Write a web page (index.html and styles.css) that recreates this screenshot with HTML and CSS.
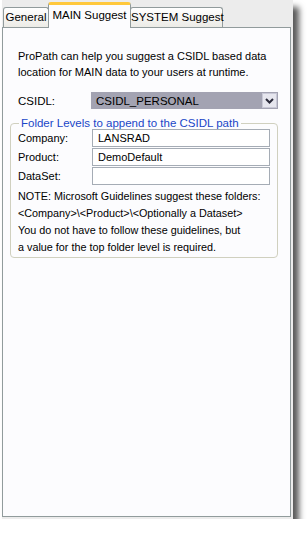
FILE: index.html
```html
<!DOCTYPE html>
<html lang="en">
<head>
    <meta charset="UTF-8">
    <meta name="viewport" content="width=device-width, initial-scale=1.0">
    <title>ProPath Settings</title>
    <link rel="stylesheet" href="styles.css">
</head>
<body>
    <div class="window">
        <div class="tabs">
            <div class="tab tab-general">General</div>
            <div class="tab tab-main active">MAIN Suggest</div>
            <div class="tab tab-system">SYSTEM Suggest</div>
        </div>
        <div class="panel">
            <p class="intro">ProPath can help you suggest a CSIDL based data<br>location for MAIN data to your users at runtime.</p>
            <div class="csidl-row">
                <span class="label">CSIDL:</span>
                <div class="select">
                    <span class="select-text">CSIDL_PERSONAL</span>
                    <span class="drop">
                        <svg width="9" height="6" viewBox="0 0 9 6"><path d="M1 1 L4.5 4.5 L8 1" fill="none" stroke="#2b2b3b" stroke-width="2"/></svg>
                    </span>
                </div>
            </div>
            <fieldset class="group">
                <legend>Folder Levels to append to the CSIDL path</legend>
                <div class="field">
                    <span class="label">Company:</span>
                    <div class="input">LANSRAD</div>
                </div>
                <div class="field">
                    <span class="label">Product:</span>
                    <div class="input">DemoDefault</div>
                </div>
                <div class="field">
                    <span class="label">DataSet:</span>
                    <div class="input"></div>
                </div>
                <p class="note">NOTE: Microsoft Guidelines suggest these folders:<br>&lt;Company&gt;\&lt;Product&gt;\&lt;Optionally a Dataset&gt;<br>You do not have to follow these guidelines, but<br>a value for the top folder level is required.</p>
            </fieldset>
        </div>
    </div>
</body>
</html>
```

FILE: styles.css
```css
body {
    margin: 0;
    background: #fff;
    font-family: "Liberation Sans", Arial, sans-serif;
    font-size: 11px;
    color: #000;
}

.window {
    width: 289px;
    margin-left: 2px;
    padding: 0 2px 2px 0;
    background: #ececec;
    box-shadow: 6px 7px 6px rgba(0, 0, 0, 0.65);
}

.tabs {
    display: flex;
    align-items: flex-end;
    height: 27px;
    padding-left: 1px;
}

.tab {
    box-sizing: border-box;
    height: 20px;
    line-height: 18px;
    text-align: center;
    white-space: nowrap;
    font-size: 11.5px;
    border: 1px solid #919b9c;
    border-bottom: none;
    border-radius: 3px 3px 0 0;
    background: linear-gradient(#ffffff, #ecebe6);
    margin-right: -1px;
}

.tab-general { width: 46px; }
.tab-main { width: 83px; }
.tab-system { width: 93px; }

.tab.active {
    position: relative;
    z-index: 1;
    height: 26px;
    margin-bottom: -1px;
    line-height: 20px;
    background: #fcfcfe;
    border-top: 3px solid #ffc83c;
}

.panel {
    box-sizing: border-box;
    height: 490px;
    border: 1px solid #919b9c;
    background: #fcfcfe;
    padding: 20px 0 0 15px;
}

.intro {
    margin: 0;
    line-height: 16px;
    font-size: 11px;
}

.csidl-row {
    display: flex;
    align-items: center;
    margin-top: 12px;
}

.csidl-row .label {
    width: 73px;
    font-size: 11.5px;
}

.select {
    box-sizing: border-box;
    display: flex;
    align-items: center;
    justify-content: space-between;
    width: 187px;
    height: 17px;
    font-size: 11.5px;
    background: #a3a3b2;
    padding: 0 1px 0 5px;
}

.drop {
    box-sizing: border-box;
    display: flex;
    align-items: center;
    justify-content: center;
    width: 15px;
    height: 15px;
    background: #e6e6ee;
    border: 1px solid #c8c8d6;
}

.group {
    width: 268px;
    box-sizing: border-box;
    margin: 8px 0 0 -8px;
    padding: 0 6px 1px 7px;
    border: 1px solid #d0d0bf;
    border-radius: 4px;
}

.group legend {
    color: #1a46c8;
    padding: 0 2px;
    margin-left: 1px;
    line-height: 13px;
    font-size: 11.5px;
}

.field {
    display: flex;
    align-items: center;
    margin-top: 1px;
}

.field:first-of-type {
    margin-top: -1px;
}

.field .label {
    width: 74px;
}

.input {
    box-sizing: border-box;
    width: 178px;
    height: 18px;
    line-height: 16px;
    border: 1px solid #a5acb5;
    background: #fff;
    padding-left: 5px;
}

.note {
    margin: 3px 0 0;
    line-height: 17px;
    font-size: 10.8px;
}
```
